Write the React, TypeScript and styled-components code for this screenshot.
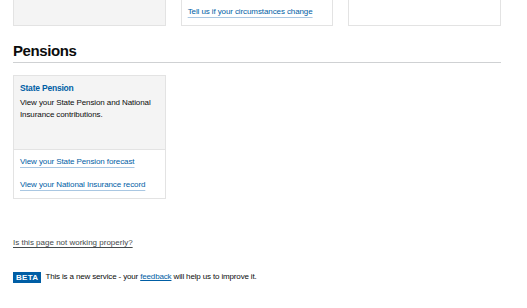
import React from 'react';
import styled, { createGlobalStyle } from 'styled-components';

const GlobalStyle = createGlobalStyle`
  body {
    margin: 0;
    background: #ffffff;
    font-family: "Liberation Sans", Arial, sans-serif;
    color: #0b0c0c;
  }
`;

const Page = styled.main`
  width: 488px;
  padding: 0 26px 0 13px;
`;

const CardGrid = styled.div<{ $top?: boolean }>`
  display: grid;
  grid-template-columns: repeat(3, 1fr);
  gap: 15px;
  margin-top: ${(p) => (p.$top ? '-1px' : '12px')};
`;

const TopCard = styled.div<{ $grey?: boolean }>`
  height: 25px;
  border: 1px solid #e3e3e3;
  background: ${(p) => (p.$grey ? '#f4f4f4' : '#ffffff')};
  padding: 0 6px;
  display: flex;
  align-items: flex-start;
`;

const CardLink = styled.a`
  display: inline-block;
  font-size: 8px;
  line-height: 12px;
  letter-spacing: -0.1px;
  color: #005ea5;
  text-decoration: underline;
  text-decoration-color: #a9c7e2;
  text-underline-offset: 3px;
  cursor: pointer;
`;

const TopLink = styled(CardLink)`
  margin-top: 6px;
`;

const SectionHeading = styled.h2`
  margin: 16px 0 0;
  padding-bottom: 2px;
  border-bottom: 1px solid #cfd1d3;
  font-size: 15px;
  line-height: 18px;
  font-weight: 700;
  letter-spacing: -0.4px;
`;

const PensionCard = styled.div`
  border: 1px solid #e3e3e3;
  display: flex;
  flex-direction: column;
`;

const CardTop = styled.div`
  background: #f4f4f4;
  min-height: 73px;
  box-sizing: border-box;
  padding: 6px 6px;
`;

const CardTitle = styled.h3`
  margin: 0;
  font-size: 8.5px;
  line-height: 12px;
  font-weight: 700;
  letter-spacing: -0.2px;
  color: #005ea5;
`;

const CardText = styled.p`
  margin: 3px 0 0;
  font-size: 8px;
  line-height: 12px;
  letter-spacing: -0.1px;
`;

const CardLinks = styled.div`
  border-top: 1px solid #e3e3e3;
  padding: 6px 6px 7px;
  display: flex;
  flex-direction: column;
  align-items: flex-start;
  gap: 11px;
`;

const Footer = styled.footer`
  margin-top: 38px;
  display: flex;
  flex-direction: column;
  gap: 22px;
`;

const ProblemLink = styled.a`
  align-self: flex-start;
  font-size: 8px;
  line-height: 12px;
  color: #454a4c;
  text-decoration: underline;
  text-underline-offset: 2px;
  cursor: pointer;
`;

const BetaBanner = styled.p`
  margin: 0;
  display: flex;
  align-items: center;
  gap: 4px;
  font-size: 8px;
  line-height: 12px;
  letter-spacing: -0.15px;
`;

const PhaseTag = styled.strong`
  background: #005ea5;
  color: #ffffff;
  font-size: 8px;
  line-height: 11px;
  padding: 0 3px;
  letter-spacing: 0.3px;
`;

const FeedbackLink = styled.a`
  color: #005ea5;
  text-decoration: underline;
  cursor: pointer;
`;

const App: React.FC = () => {
  return (
    <>
      <GlobalStyle />
      <Page>
        <CardGrid $top>
          <TopCard $grey />
          <TopCard>
            <TopLink>Tell us if your circumstances change</TopLink>
          </TopCard>
          <TopCard />
        </CardGrid>

        <SectionHeading>Pensions</SectionHeading>

        <CardGrid>
          <PensionCard>
            <CardTop>
              <CardTitle>State Pension</CardTitle>
              <CardText>View your State Pension and National Insurance contributions.</CardText>
            </CardTop>
            <CardLinks>
              <CardLink>View your State Pension forecast</CardLink>
              <CardLink>View your National Insurance record</CardLink>
            </CardLinks>
          </PensionCard>
        </CardGrid>

        <Footer>
          <ProblemLink>Is this page not working properly?</ProblemLink>
          <BetaBanner>
            <PhaseTag>BETA</PhaseTag>
            <span>
              This is a new service - your <FeedbackLink>feedback</FeedbackLink> will help us to improve it.
            </span>
          </BetaBanner>
        </Footer>
      </Page>
    </>
  );
};

export default App;
